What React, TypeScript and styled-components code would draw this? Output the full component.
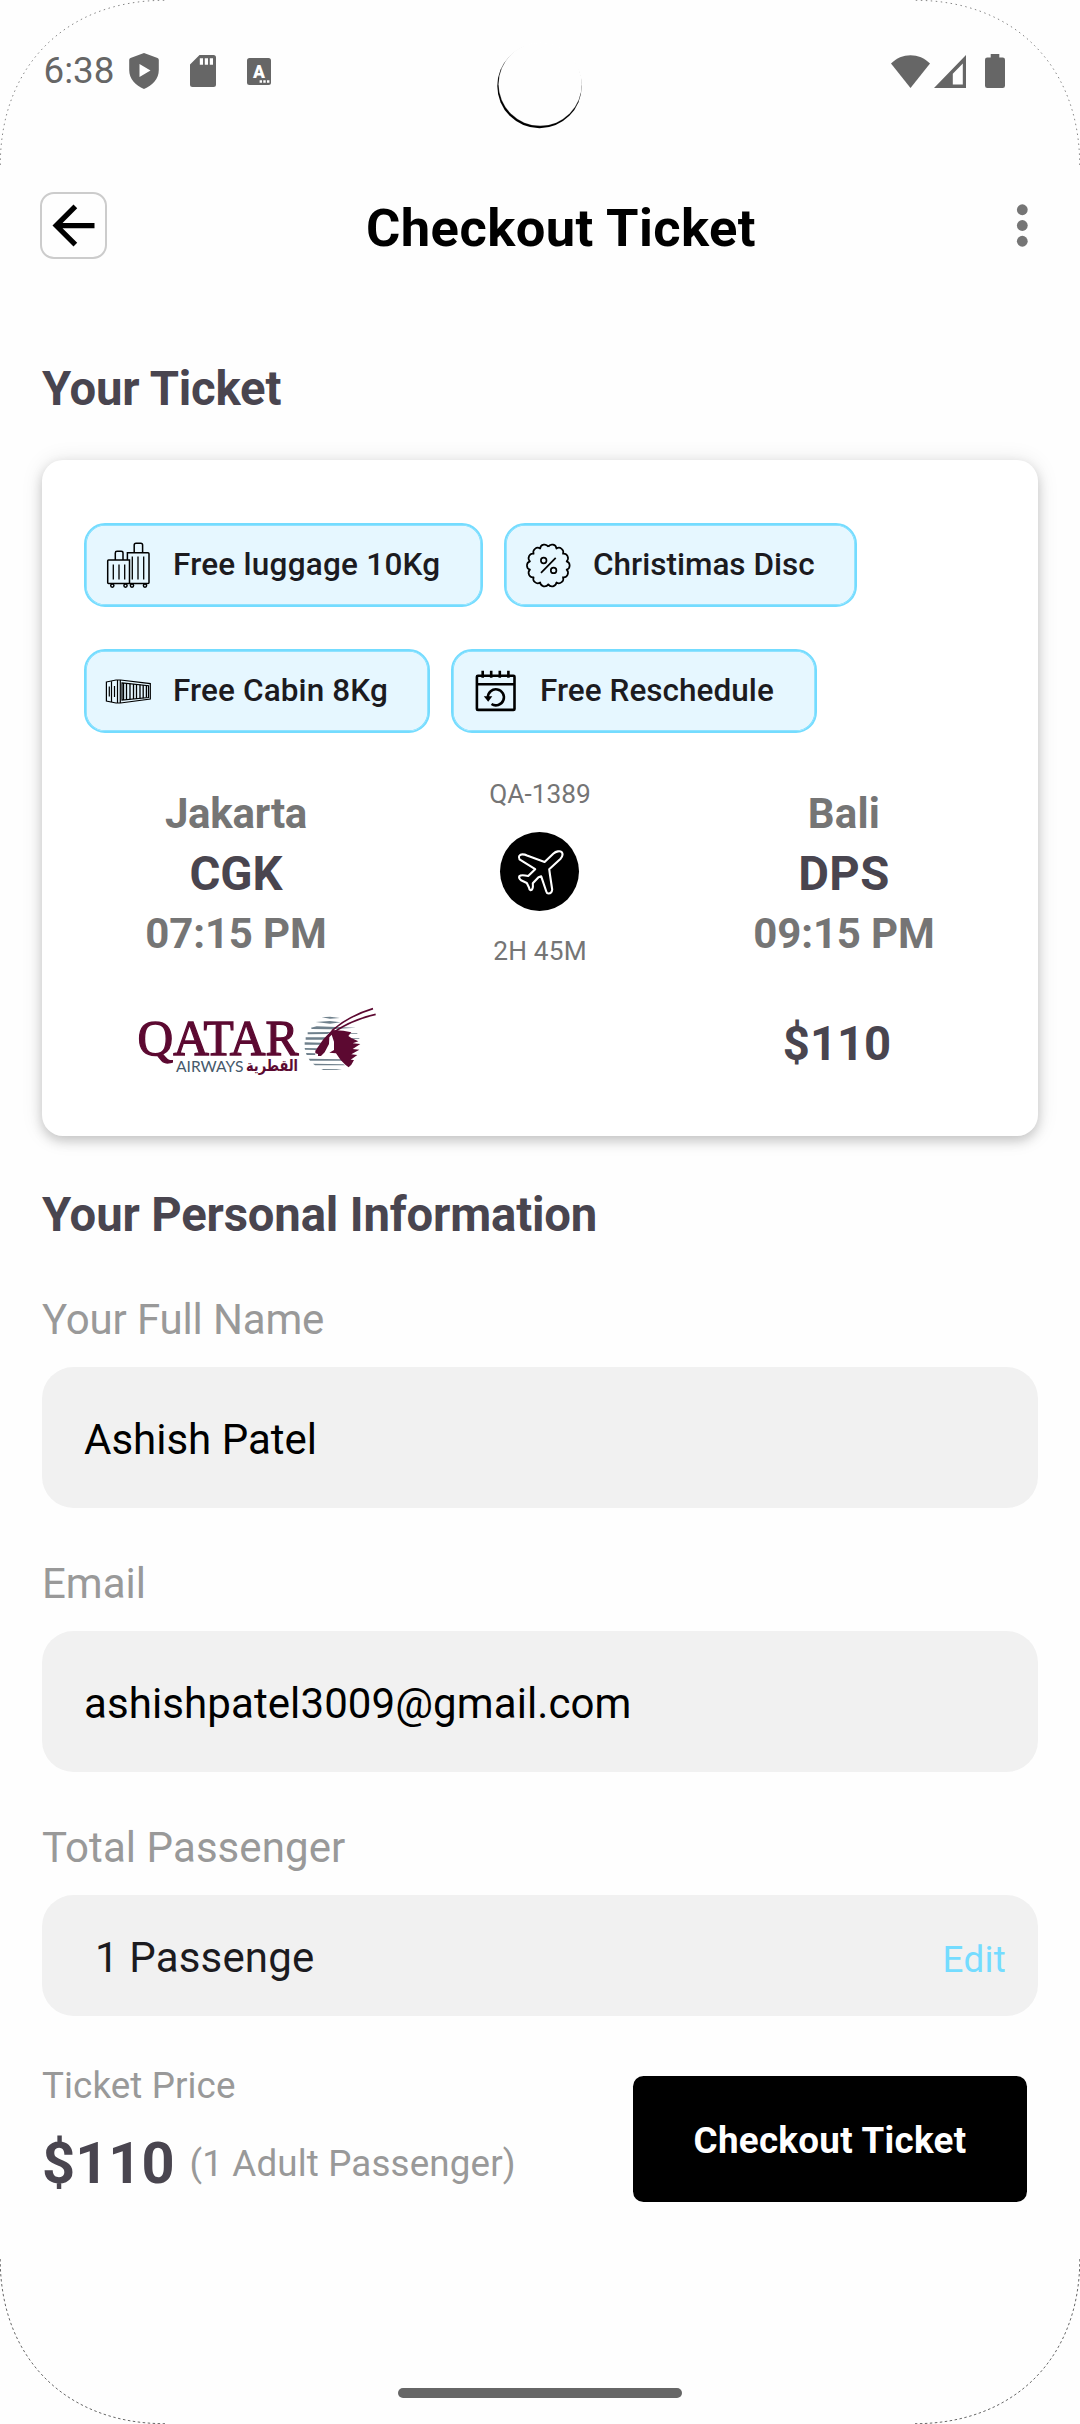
import React from "react";
import styled, { createGlobalStyle } from "styled-components";

const ink = "#49454f";
const grey = "#757575";
const hint = "#999999";
const sky = "#74dcff";

const GlobalStyle = createGlobalStyle`
  * { box-sizing: border-box; }
  body { margin: 0; background: #fff; font-family: Roboto, "Noto Sans", sans-serif; }
  svg { display: block; flex: none; }
`;

const Screen = styled.main`
  position: relative;
  display: flex;
  flex-direction: column;
  width: 1080px;
  height: 2424px;
  overflow: hidden;
  background: #fefefe;
`;

const Txt = styled.span<{ $size: number; $line: number; $weight?: number; $color?: string; $track?: number }>`
  display: block;
  white-space: nowrap;
  font-size: ${(p) => p.$size}px;
  line-height: ${(p) => p.$line}px;
  font-weight: ${(p) => p.$weight ?? 400};
  color: ${(p) => p.$color ?? "#000"};
  letter-spacing: ${(p) => p.$track ?? 0}px;
`;

const StatusBar = styled.div`
  display: flex;
  align-items: center;
  height: 142px;
  padding: 0 75px 0 43.5px;
`;
const Clock = styled(Txt)`
  width: 85.5px;
`;
const StatusGroup = styled.div<{ $gap: number }>`
  display: flex;
  align-items: center;
  gap: ${(p) => p.$gap}px;
`;
const Spacer = styled.div`flex: 1;`;

const Header = styled.header`
  display: flex;
  align-items: center;
  height: 67px;
  margin-top: 50px;
  padding: 0 52px 0 40px;
`;
const BackButton = styled.button`
  display: flex;
  align-items: center;
  justify-content: center;
  width: 67px;
  height: 67px;
  padding: 0;
  background: transparent;
  border: 2px solid #ccc;
  border-radius: 14px;
`;
const HeaderTitle = styled(Txt)`
  flex: 1;
  text-align: center;
  padding: 4px 1px 0 0;
`;

const Content = styled.div`
  display: flex;
  flex-direction: column;
  padding: 0 42px;
`;
const SectionTitle = styled(Txt)<{ $top: number }>`
  margin-top: ${(p) => p.$top}px;
`;

const Card = styled.section`
  height: 676px;
  margin-top: 43px;
  padding: 63px 42px 0;
  background: #fff;
  border-radius: 21px;
  box-shadow: 0 5px 12px rgba(0, 0, 0, 0.18), 0 1px 22px rgba(0, 0, 0, 0.1);
`;
const Chips = styled.div`
  display: flex;
  flex-wrap: wrap;
  gap: 42px 21px;
`;
const Chip = styled.div<{ $width: number }>`
  display: flex;
  align-items: center;
  gap: 21.1px;
  width: ${(p) => p.$width}px;
  height: 84px;
  padding-left: 18.9px;
  background: #e6f7ff;
  border: 2px solid ${sky};
  border-radius: 21px;
  box-shadow: inset 0 0 0 0.7px ${sky};
`;
const Route = styled.div`
  display: grid;
  grid-template-columns: repeat(3, 304px);
  height: 193px;
  margin-top: 43px;
  text-align: center;
`;
const Airport = styled.div`padding-top: 8px;`;
const Leg = styled.div`
  display: flex;
  flex-direction: column;
  align-items: center;
`;
const PlaneBadge = styled.div`
  width: 79px;
  height: 79px;
  margin: 20px 1px 22px 0;
  border-radius: 50%;
  background: #000;
`;
const FareRow = styled.div`
  display: flex;
  justify-content: space-between;
  margin-top: 31px;
  padding-left: 46px;
`;
const Fare = styled(Txt)`
  width: 304px;
  padding: 14px 14px 0 0;
  text-align: center;
`;

const Label = styled(Txt)<{ $top?: number }>`
  margin: ${(p) => p.$top ?? 51}px 0 22px;
`;
const Field = styled.div<{ $height: number; $left: number }>`
  display: flex;
  align-items: center;
  justify-content: space-between;
  height: ${(p) => p.$height}px;
  padding: 4px 32px 0 ${(p) => p.$left}px;
  background: #f1f1f1;
  border-radius: 31.5px;
`;
const EditLink = styled(Txt)`padding-top: 4px;`;

const Footer = styled.footer`
  display: flex;
  justify-content: space-between;
  margin-top: 47px;
  padding: 0 53px 0 42px;
`;
const Summary = styled.div`padding-top: 1px;`;
const PriceLine = styled.div`
  display: flex;
  align-items: flex-start;
  gap: 15px;
  margin-top: 20px;
`;
const Note = styled(Txt)`padding-top: 14px;`;
const CheckoutButton = styled.button`
  display: flex;
  align-items: center;
  justify-content: center;
  width: 394px;
  height: 126px;
  margin-top: 13px;
  padding: 3px 0 0;
  background: #000;
  border: 0;
  border-radius: 10.5px;
  font-family: inherit;
`;
const HomeBar = styled.div`
  align-self: center;
  width: 284px;
  height: 10px;
  margin: auto 0 26px;
  border-radius: 5px;
  background: #666;
`;
const Bezel = styled.svg`
  position: absolute;
  inset: 0;
  pointer-events: none;
`;

const ShieldIcon = () => (
  <svg width="30" height="36" viewBox="0 0 30 36">
    <path fillRule="evenodd" fill="#666" d="M15 0 L28.5 5 Q29.8 5.6 29.8 7 V17 C29.8 26 23.5 32.5 15 36 C6.500 32.500 .2 26 .2 17 V7 Q.2 5.600 1.500 5 Z M10.500 11 V24 L21.500 17.500 Z" />
  </svg>
);
const SdIcon = () => (
  <svg width="26" height="32" viewBox="0 0 26 32">
    <path fillRule="evenodd" fill="#666" d="M9.500 0 H23.500 Q26 0 26 2.500 V29.500 Q26 32 23.500 32 H2.500 Q0 32 0 29.500 V9.500 Z M9.800 3.300 V9.700 H13 V3.300 Z M14.800 3.300 V9.700 H18 V3.300 Z M19.800 3.300 V9.700 H23 V3.300 Z" />
  </svg>
);
const LetterIcon = () => (
  <svg width="24" height="27" viewBox="0 0 24 27">
    <rect width="24" height="27" rx="2.500" fill="#666" />
    <text x="12" y="20" textAnchor="middle" fontFamily="Roboto, sans-serif" fontWeight="900" fontSize="17.500" fill="#fff">A</text>
    <path fill="#fff" d="M12.600 22.300h2.400v2.400h-2.400z M16.300 22.300h2.400v2.400h-2.400z M20 22.300h2.400v2.400h-2.400z" />
  </svg>
);
const WifiIcon = () => (
  <svg width="39" height="33" viewBox="0 0 39 33">
    <path fill="#666" d="M0 8.500 C10.500 -2.600 28.500 -2.600 39 8.500 L19.500 33 Z" />
  </svg>
);
const SignalIcon = () => (
  <svg width="32" height="33" viewBox="0 0 32 33">
    <path fillRule="evenodd" fill="#666" d="M32 0 V33 H0 Z M28.800 8.500 L18.800 18.700 V29.500 H28.800 Z" />
  </svg>
);
const BatteryIcon = () => (
  <svg width="20" height="34" viewBox="0 0 20 34">
    <path fill="#666" d="M5.700 0 H14.300 V3.400 H17.700 Q20 3.400 20 5.700 V31.700 Q20 34 17.700 34 H2.300 Q0 34 0 31.700 V5.700 Q0 3.400 2.300 3.400 H5.700 Z" />
  </svg>
);
const BackIcon = () => (
  <svg width="63" height="63" viewBox="0 0 24 24">
    <path d="M20 11H7.830l5.590-5.590L12 4l-8 8 8 8 1.410-1.410L7.830 13H20v-2z" />
  </svg>
);
const MoreIcon = () => (
  <svg width="12" height="63" viewBox="0 0 12 63" fill={grey}>
    <circle cx="6.300" cy="15.750" r="5.400" />
    <circle cx="6.300" cy="31.500" r="5.400" />
    <circle cx="6.300" cy="47.250" r="5.400" />
  </svg>
);

const LuggageIcon = () => (
  <svg width="47" height="47" viewBox="0 0 47 47" fill="none" stroke="#000" strokeWidth="1.500">
    <path d="M3.500 18 H24.500 V41.500 H3.500 Q2.700 41.500 2.700 40.500 V19 Q2.700 18 3.500 18 Z" />
    <path d="M10.300 18 V11 Q10.300 9.300 12 9.300 H16.200 Q18 9.300 18 11 V18 M22.400 18 V10.700 H43 Q44 10.700 44 11.700 V40.500 Q44 41.500 43 41.500 H24.500" />
    <path d="M29.200 10.500 V3 Q29.200 1.200 31 1.200 H35.800 Q37.600 1.200 37.600 3 V10.500" />
    <path strokeWidth="1.300" d="M8.300 22.500 V37.500 M14 22.500 V37.500 M19.700 22.500 V37.500 M27.300 14.500 V37.500 M33 14.500 V37.500 M38.700 14.500 V37.500" />
    <circle cx="7.300" cy="43.600" r="1.600" /><circle cx="20.500" cy="43.600" r="1.600" />
    <circle cx="27" cy="43.600" r="1.600" /><circle cx="40" cy="43.600" r="1.600" />
  </svg>
);

// Fourteen outward bumps around the badge, with a notch at twelve o'clock.
const scallop = Array.from({ length: 15 }, (_, i) => {
  const a = (i / 14) * Math.PI * 2 - Math.PI / 2;
  const x = (23.3 + 18.8 * Math.cos(a)).toFixed(2);
  const y = (23.5 + 18.8 * Math.sin(a)).toFixed(2);
  return i === 0 ? `M${x} ${y}` : `A4.400 4.400 0 0 1 ${x} ${y}`;
}).join(" ");
const DiscountIcon = () => (
  <svg width="47" height="47" viewBox="0 0 47 47" fill="none" stroke="#000" strokeWidth="1.700">
    <path d={scallop} strokeLinejoin="round" />
    <circle cx="18.700" cy="18.500" r="2.800" />
    <circle cx="28.600" cy="28.400" r="2.800" />
    <path d="M16 30.800 L30.700 15.800" />
  </svg>
);
const CabinIcon = () => (
  <svg width="47" height="47" viewBox="0 0 47 47" fill="none" stroke="#000" strokeWidth="1.200">
    <path d="M1.400 14 L11 12 H15.500 L45.300 15.600 V31 L15.500 35 H11 L1.400 33 Z" />
    <path d="M6.500 13.200 V34 M12.500 12 V35 M15.300 12 V35 M4.300 18.500 V28.500 M9.500 18 V29" />
    <path d="M17 14.800 L43.500 17.700 V29.500 L17 32 Z" />
    <path strokeWidth="1.300" d="M18.500 15 V32 M21.500 15 V32 M25 15.500 V31.500 M28.500 16 V31 M31.500 16 V31 M35 16.500 V30.700 M38.200 17 V30.300 M41.400 17.500 V29.500" />
  </svg>
);
const RescheduleIcon = () => (
  <svg width="47" height="47" viewBox="0 0 47 47" fill="none" stroke="#000" strokeWidth="2.600">
    <rect x="4.900" y="7.700" width="37.600" height="34.200" rx="1" />
    <path d="M4.900 16.200 H42.500 M10.700 2.800 V9.800 M19.200 2.800 V9.800 M27.800 2.800 V9.800 M36.400 2.800 V9.800" />
    <path d="M15.900 29.500 A8 8 0 1 1 19.500 36" />
    <path fill="#000" stroke="none" d="M11.800 28.300 H20.300 L16.200 33.800 Z" />
  </svg>
);
const PlaneIcon = () => (
  <svg width="79" height="79" viewBox="0 0 79 79" fill="none" stroke="#fff" strokeWidth="2.100" strokeLinejoin="round">
    <path d="M19.500 27.300 C17.800 24.500 19.800 22.300 22.500 22.400 Q25 22.500 27 23.500 L44.600 29.900 L53.500 21.500 C56 19.300 60 18.600 61.600 20 C63 21.500 62.500 24.300 60.600 26.700 L49.200 37.200 L50 43 L52.200 57.500 Q51.800 61.500 48.500 61.500 Q46.800 61.500 46.300 59.500 L41.200 44.300 L38.500 45.200 L32.800 51.300 Q33.500 57.800 30.500 58.300 Q29.300 58 29 55.500 L26.800 51 L21 48.300 Q18.500 46.300 19.300 44.200 Q21 42.500 28.200 44 L35.200 37.200 Z" />
  </svg>
);

const QatarLogo = () => (
  <svg width="250" height="90" viewBox="0 0 250 90">
    <g fill="#5c0931">
      <text x="7.500" y="54.500" fontFamily="'Liberation Serif', serif" fontSize="51.500" stroke="#5c0931" strokeWidth="1.300" textLength="161" lengthAdjust="spacingAndGlyphs">QATAR</text>
      <text x="116" y="70.500" fontFamily="'DejaVu Sans', sans-serif" fontWeight="700" fontSize="16" textLength="52" lengthAdjust="spacingAndGlyphs">القطرية</text>
    </g>
    <text x="46" y="71.700" fill="#46596b" fontFamily="Lato, sans-serif" fontSize="15" textLength="67.500" lengthAdjust="spacingAndGlyphs">AIRWAYS</text>
    <g transform="scale(.33333)">
      <path fill="#6f808c" d="M575 52 L600 50 L630 54 L600 56 Z M557 66 L600 63 L632 67 L600 71 Z M543 83 L560 79 L678 83 L600 88 L545 87 Z M533 97 L602 96 L592 102 L533 103 Z M527 112 L590 112 L582 119 L527 119 Z M524 127 L576 128 L570 134 L524 134 Z M524 144 L562 145 L558 150 L525 149 Z M528 159 L555 160 L556 165 L530 165 Z M536 176 L640 178 L642 182 L540 182 Z M549 191 L640 193 L645 196 L555 196 Z M574 207 L636 208 L620 210 L580 210 Z M655 99 L682 99 L682 101 L660 101 Z M665 115 L688 115 L688 117 L665 117 Z" />
      <path fill="#5c0931" d="M606 90 L580 118 L556 152 L556 160 L564 162 L564 168 L573 168 L584 157 L597 132 L598 112 L605 104 L612 125 L612 150 L598 158 L618 160 L632 180 L646 194 L656 202 L664 194 L672 180 L662 179 L682 165 L664 163 L688 149 L668 147 L691 132 L668 130 L685 124 L664 114 L655 108 L664 97 L640 92 Z" />
      <path fill="none" stroke="#5c0931" strokeWidth="5" d="M606 92 Q655 48 729 26 M614 95 Q665 60 737 43" />
    </g>
  </svg>
);

const chips = [
  { icon: <LuggageIcon />, label: "Free luggage 10Kg", width: 399, track: 0.24 },
  { icon: <DiscountIcon />, label: "Christimas Disc", width: 353, track: 0 },
  { icon: <CabinIcon />, label: "Free Cabin 8Kg", width: 346, track: 0.12 },
  { icon: <RescheduleIcon />, label: "Free Reschedule", width: 366, track: 0.04 },
];

type Stop = { city: string; code: string; time: string; tracks: [number, number, number] };
const AirportInfo = ({ city, code, time, tracks }: Stop) => (
  <Airport>
    <Txt $size={42} $line={60} $weight={700} $color={grey} $track={tracks[0]}>{city}</Txt>
    <Txt $size={47.25} $line={60} $weight={700} $color={ink} $track={tracks[1]}>{code}</Txt>
    <Txt $size={42} $line={60} $weight={700} $color={grey} $track={tracks[2]}>{time}</Txt>
  </Airport>
);

export default function App() {
  return (
    <Screen>
      <GlobalStyle />
      <StatusBar>
        <Clock $size={36.75} $line={44} $color="#666">6:38</Clock>
        <StatusGroup $gap={31}>
          <ShieldIcon />
          <SdIcon />
          <LetterIcon />
        </StatusGroup>
        <Spacer />
        <StatusGroup $gap={4}>
          <WifiIcon />
          <SignalIcon />
        </StatusGroup>
        <StatusGroup $gap={19}>
          <span />
          <BatteryIcon />
        </StatusGroup>
      </StatusBar>

      <Header>
        <BackButton aria-label="Back"><BackIcon /></BackButton>
        <HeaderTitle $size={52.5} $line={62} $weight={700} $track={0.45}>Checkout Ticket</HeaderTitle>
        <MoreIcon />
      </Header>

      <Content>
        <SectionTitle $top={102} $size={47.25} $line={56} $weight={700} $color={ink} $track={-0.2}>Your Ticket</SectionTitle>
        <Card>
          <Chips>
            {chips.map((c) => (
              <Chip key={c.label} $width={c.width}>
                {c.icon}
                <Txt $size={31.5} $line={42} $weight={500} $color="#1c1b1f" $track={c.track}>{c.label}</Txt>
              </Chip>
            ))}
          </Chips>
          <Route>
            <AirportInfo city="Jakarta" code="CGK" time="07:15 PM" tracks={[-0.25, 0, -0.15]} />
            <Leg>
              <Txt $size={26.25} $line={36} $color={grey}>QA-1389</Txt>
              <PlaneBadge><PlaneIcon /></PlaneBadge>
              <Txt $size={26.25} $line={36} $color={grey} $track={0.2}>2H 45M</Txt>
            </Leg>
            <AirportInfo city="Bali" code="DPS" time="09:15 PM" tracks={[0.2, 0.4, -0.15]} />
          </Route>
          <FareRow>
            <QatarLogo />
            <Fare $size={47.25} $line={60} $weight={700} $color={ink}>$110</Fare>
          </FareRow>
        </Card>

        <SectionTitle $top={51} $size={47.25} $line={56} $weight={700} $color={ink} $track={-0.15}>Your Personal Information</SectionTitle>
        <Label $top={52} $size={42} $line={50} $color={hint} $track={-0.15}>Your Full Name</Label>
        <Field $height={141} $left={42}><Txt $size={42} $line={50}>Ashish Patel</Txt></Field>
        <Label $size={42} $line={50} $color={hint}>Email</Label>
        <Field $height={141} $left={42}><Txt $size={42} $line={50} $track={0.1}>ashishpatel3009@gmail.com</Txt></Field>
        <Label $size={42} $line={50} $color={hint} $track={0.07}>Total Passenger</Label>
        <Field $height={121} $left={53}>
          <Txt $size={42} $line={50} $color="#1c1b1f" $track={0.15}>1 Passenge</Txt>
          <EditLink $size={36.75} $line={44} $color={sky} $track={0.3}>Edit</EditLink>
        </Field>
      </Content>

      <Footer>
        <Summary>
          <Txt $size={36.75} $line={44} $color={hint} $track={0.1}>Ticket Price</Txt>
          <PriceLine>
            <Txt $size={57.75} $line={70} $weight={700} $color={ink}>$110</Txt>
            <Note $size={36.75} $line={44} $color={hint} $track={0.14}>(1 Adult Passenger)</Note>
          </PriceLine>
        </Summary>
        <CheckoutButton>
          <Txt $size={36.75} $line={44} $weight={700} $color="#fff" $track={0.3}>Checkout Ticket</Txt>
        </CheckoutButton>
      </Footer>
      <HomeBar />

      <Bezel width="1080" height="2424" viewBox="0 0 1080 2424" fill="none" stroke="#000">
        <g strokeWidth=".8" strokeDasharray="1.500 3.500" opacity=".6">
          <path d="M0.300 165 C0.300 66 66 0.300 165 0.300" />
          <path d="M1079.700 165 C1079.700 66 1014 0.300 915 0.300" />
        </g>
        <g strokeWidth=".8" strokeDasharray="2.500 2.500" opacity=".75">
          <path d="M0.200 2259 C0.200 2358 66 2423.700 165 2423.700" />
          <path d="M1079.800 2259 C1079.800 2358 1014 2423.700 915 2423.700" />
        </g>
        <circle cx="539.500" cy="86" r="42.200" fill="#000" stroke="none" />
        <circle cx="540.200" cy="84.200" r="41.600" fill="#fefefe" stroke="#fefefe" strokeWidth=".2" />
      </Bezel>
    </Screen>
  );
}
